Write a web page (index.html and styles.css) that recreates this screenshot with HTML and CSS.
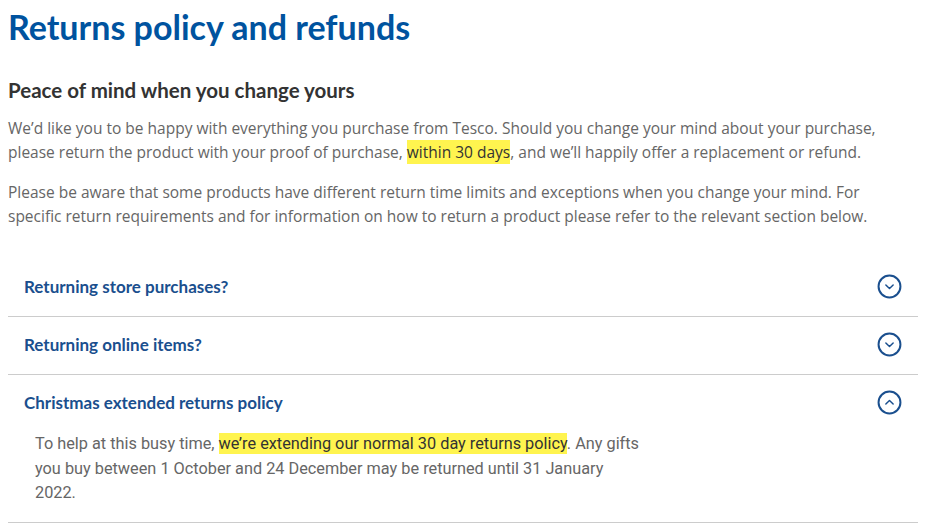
FILE: index.html
```html
<!DOCTYPE html>
<html lang="en">
<head>
    <meta charset="UTF-8">
    <meta name="viewport" content="width=device-width, initial-scale=1.0">
    <title>Returns policy and refunds - Tesco</title>
    <link rel="stylesheet" href="styles.css">
</head>
<body>
  <div class="page">
    <h1 class="page-title">Returns policy and refunds</h1>

    <h2 class="section-title">Peace of mind when you change yours</h2>
    <p class="intro">We’d like you to be happy with everything you purchase from Tesco. Should you change your mind about your purchase, please return the product with your proof of purchase, <mark>within 30 days</mark>, and we’ll happily offer a replacement or refund.</p>
    <p class="intro">Please be aware that some products have different return time limits and exceptions when you change your mind. For specific return requirements and for information on how to return a product please refer to the relevant section below.</p>

    <div class="accordion">
      <div class="acc-item">
        <div class="acc-head">
          <span>Returning store purchases?</span>
          <svg class="acc-icon" viewBox="0 0 24 24"><circle cx="12" cy="12" r="10.5"/><path class="chev" d="M8.5 10.5l3.5 3.5 3.5-3.5"/></svg>
        </div>
      </div>
      <div class="acc-item">
        <div class="acc-head">
          <span>Returning online items?</span>
          <svg class="acc-icon" viewBox="0 0 24 24"><circle cx="12" cy="12" r="10.5"/><path class="chev" d="M8.5 10.5l3.5 3.5 3.5-3.5"/></svg>
        </div>
      </div>
      <div class="acc-item open">
        <div class="acc-head">
          <span>Christmas extended returns policy</span>
          <svg class="acc-icon" viewBox="0 0 24 24"><circle cx="12" cy="12" r="10.5"/><path class="chev" d="M8.5 13.5l3.5-3.5 3.5 3.5"/></svg>
        </div>
        <div class="acc-body">
          <p>To help at this busy time, <mark>we’re extending our normal 30 day returns policy</mark>. Any gifts you buy between 1 October and 24 December may be returned until 31 January 2022.</p>
        </div>
      </div>
    </div>
  </div>
</body>
</html>
```

FILE: styles.css
```css
html, body {
    margin: 0;
    padding: 0;
    background-color: #ffffff;
    font-family: 'Open Sans', 'Lato', sans-serif;
}

.page {
    width: 910px;
    padding: 0 8px;
}

mark {
    background-color: #fff44f;
    color: #333333;
    padding: 1px 0;
}

/* Headings */
.page-title {
    margin: 0;
    padding-top: 6px;
    font-family: 'Lato', sans-serif;
    font-size: 34px;
    line-height: 42px;
    font-weight: 700;
    color: #00539f;
}

.section-title {
    margin: 29px 0 13px;
    font-family: 'Lato', sans-serif;
    font-size: 20.5px;
    line-height: 26px;
    font-weight: 700;
    color: #333333;
}

.intro {
    width: 900px;
    margin: 0 0 16px;
    font-size: 15.5px;
    line-height: 24px;
    color: #666666;
}

/* Accordion */
.accordion {
    margin-top: 31px;
}

.acc-item {
    border-bottom: 1px solid #cccccc;
}

.acc-head {
    display: flex;
    justify-content: space-between;
    align-items: center;
    height: 54px;
    padding: 0 16px 3px;
    font-family: 'Lato', sans-serif;
    font-size: 17px;
    font-weight: 700;
    color: #1a4f8e;
}

.acc-icon {
    width: 25px;
    height: 25px;
    fill: none;
    stroke: #1a4f8e;
    stroke-width: 1.9;
    stroke-linecap: round;
    stroke-linejoin: round;
}

.acc-icon .chev {
    stroke-width: 1.4;
}

.acc-body {
    padding: 0 0 16px 27px;
}

.acc-body p {
    width: 612px;
    margin: 0;
    font-family: 'Roboto', sans-serif;
    font-size: 16.3px;
    line-height: 24.5px;
    color: #666666;
}
```
